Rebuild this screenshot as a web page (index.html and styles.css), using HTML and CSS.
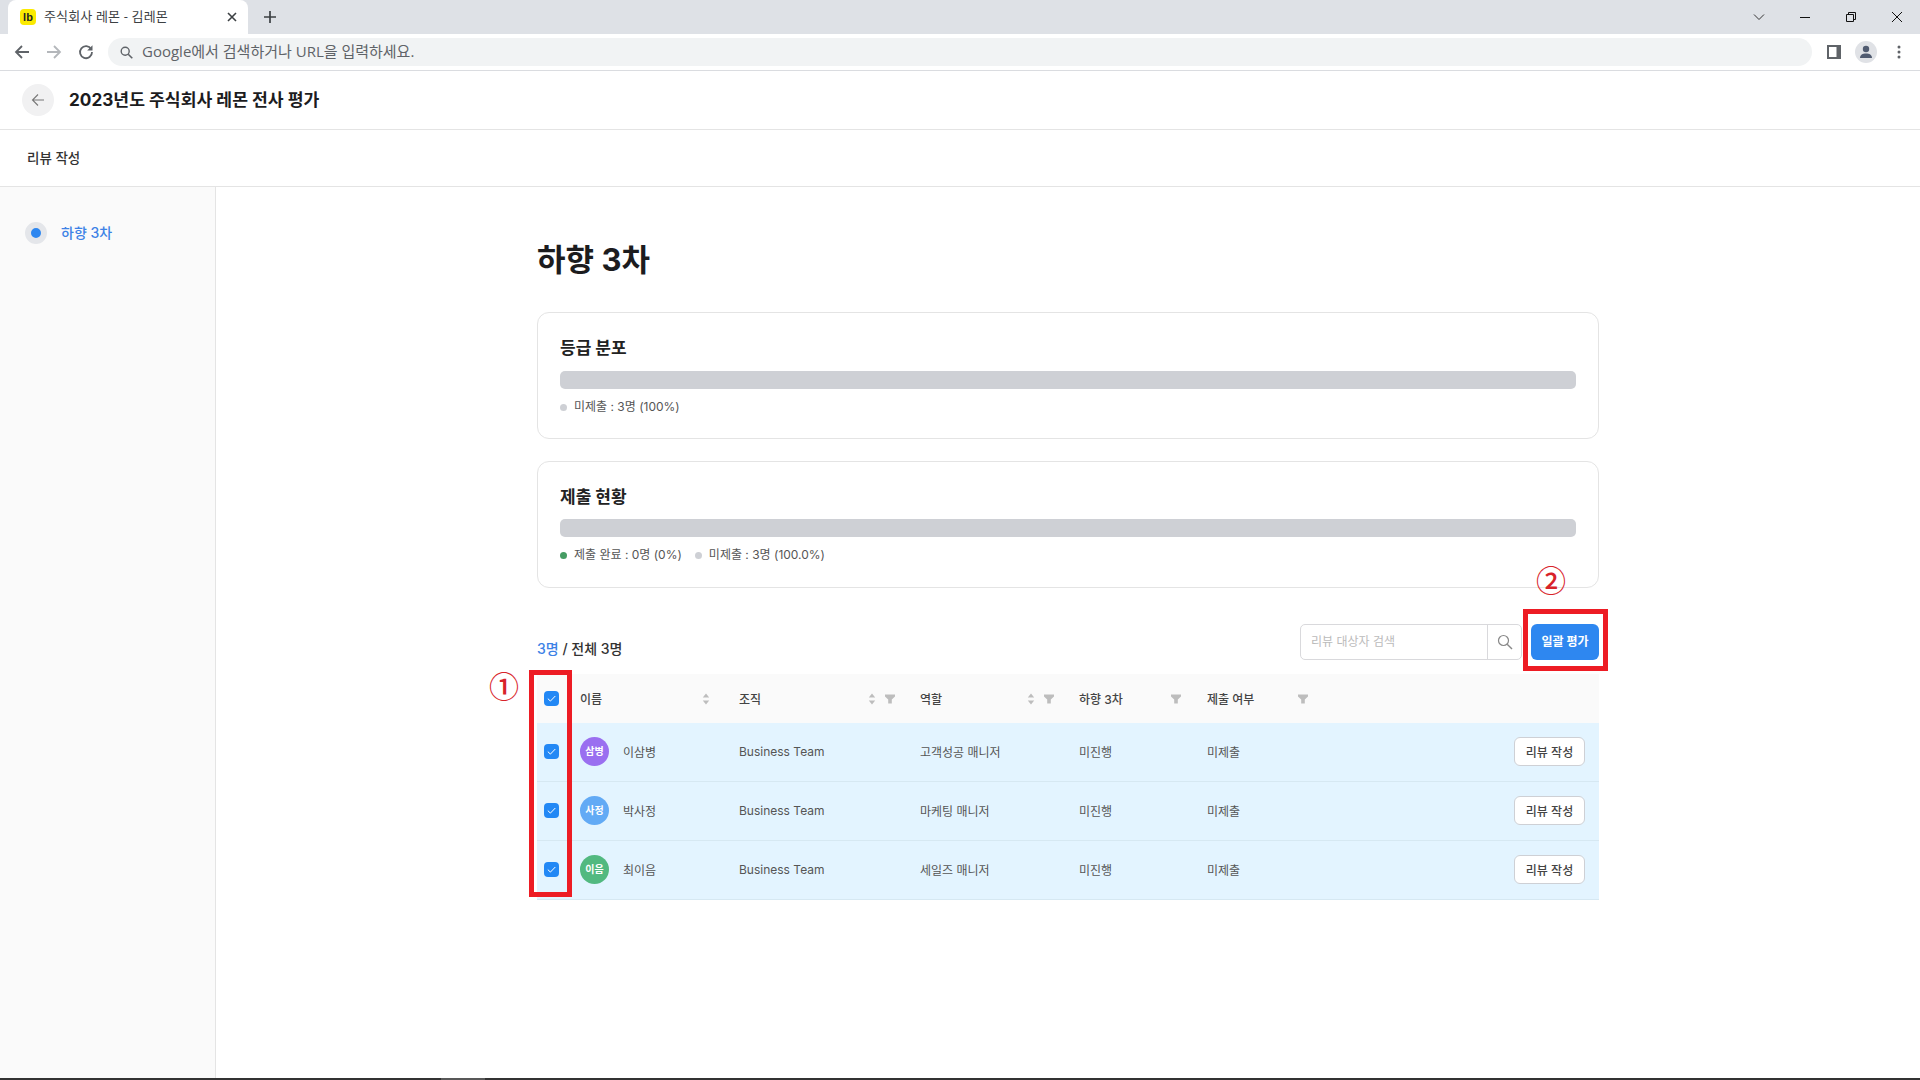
FILE: index.html

```html
<!DOCTYPE html>
<html lang="ko">
<head>
  <meta charset="UTF-8" />
  <meta name="viewport" content="width=device-width, initial-scale=1.0"/>
  <title>주식회사 레몬 - 김레몬</title>
  <link rel="stylesheet" href="styles.css">
</head>
<body>
  <svg class="defs" width="0" height="0" aria-hidden="true">
    <symbol id="i-sort" viewBox="0 0 10 14"><path d="M5 1.5 8.2 5.5H1.8zM5 12.5 1.8 8.5H8.2z"/></symbol>
    <symbol id="i-filter" viewBox="0 0 10 10"><path d="M0 .5h10v2L6.8 5.500v4H3.200v-4L0 2.500z"/></symbol>
    <symbol id="i-check" viewBox="0 0 15 15"><path d="M3.800 7.600 6.400 10.100 11.300 5" fill="none" stroke="#fff" stroke-width="1"/></symbol>
  </svg>

  <!-- browser chrome -->
  <div class="tabstrip">
    <div class="tab">
      <span class="favicon">lb</span>
      <span class="tab-title">주식회사 레몬 - 김레몬</span>
      <svg class="tab-close" width="10" height="10" viewBox="0 0 10 10"><path d="M1 1 9 9M9 1 1 9" stroke="#3c4043" stroke-width="1.6"/></svg>
    </div>
    <svg class="tab-new" width="14" height="14" viewBox="0 0 14 14"><path d="M7 1v12M1 7h12" stroke="#3c4043" stroke-width="1.7"/></svg>
    <div class="win-btns">
      <svg width="14" height="14" viewBox="0 0 14 14"><path d="M2 4.5 7 9.5 12 4.5" fill="none" stroke="#333" stroke-width="1"/></svg>
      <svg width="14" height="14" viewBox="0 0 14 14"><path d="M2 7.5H12" stroke="#111" stroke-width="1"/></svg>
      <svg width="14" height="14" viewBox="0 0 14 14"><path d="M2.5 4.5h7v7h-7zM4.5 4.5v-2h7v7h-2" fill="none" stroke="#111" stroke-width="1"/></svg>
      <svg width="14" height="14" viewBox="0 0 14 14"><path d="M2 2 12 12M12 2 2 12" stroke="#111" stroke-width="1"/></svg>
    </div>
  </div>
  <div class="toolbar">
    <svg class="nav-icon" width="16" height="16" viewBox="0 0 16 16"><path d="M15 8H2M8 2 2 8l6 6" fill="none" stroke="#5f6368" stroke-width="1.8"/></svg>
    <svg class="nav-icon" width="16" height="16" viewBox="0 0 16 16"><path d="M1 8h13M8 2l6 6-6 6" fill="none" stroke="#b4b7bb" stroke-width="1.8"/></svg>
    <svg class="nav-icon" width="16" height="16" viewBox="0 0 16 16"><path d="M13.2 5.2A6 6 0 1 0 14 8" fill="none" stroke="#5f6368" stroke-width="1.8"/><path d="M14.5 1.2v5.3H9.2z" fill="#5f6368"/></svg>
    <div class="omnibox">
      <svg width="13" height="13" viewBox="0 0 13 13"><circle cx="5.2" cy="5.2" r="4" fill="none" stroke="#5f6368" stroke-width="1.4"/><path d="M8.2 8.2 12.3 12.3" stroke="#5f6368" stroke-width="1.6"/></svg>
      <span>Google에서 검색하거나 URL을 입력하세요.</span>
    </div>
    <div class="toolbar-right">
      <svg width="14" height="14" viewBox="0 0 14 14"><path d="M0 0h14v14H0zM2 2v10h7.5V2z" fill="#5f6368" fill-rule="evenodd"/></svg>
      <span class="profile">
        <svg width="14" height="14" viewBox="0 0 14 14"><circle cx="7" cy="4" r="3.2" fill="#505b70"/><path d="M1 13c0-3.4 2.6-4.6 6-4.6s6 1.2 6 4.6z" fill="#505b70"/></svg>
      </span>
      <svg width="4" height="14" viewBox="0 0 4 14"><circle cx="2" cy="2" r="1.5" fill="#5f6368"/><circle cx="2" cy="7" r="1.5" fill="#5f6368"/><circle cx="2" cy="12" r="1.5" fill="#5f6368"/></svg>
    </div>
  </div>

  <!-- page -->
  <header class="page-head">
    <button class="back-btn">
      <svg width="14" height="14" viewBox="0 0 14 14"><path d="M13 7H1.5M7 1.5 1.5 7 7 12.5" fill="none" stroke="#777" stroke-width="1.1"/></svg>
    </button>
    <div class="page-title">2023년도 주식회사 레몬 전사 평가</div>
  </header>
  <div class="sub-head">리뷰 작성</div>

  <div class="main">
    <aside class="sidebar">
      <div class="side-item"><span class="side-dot"></span><span class="side-label">하향 3차</span></div>
    </aside>
    <div class="content">
      <div class="content-inner">
        <h1>하향 3차</h1>

        <section class="card">
          <h2>등급 분포</h2>
          <div class="bar"></div>
          <div class="legend">
            <span class="legend-item"><i class="dot"></i>미제출 : 3명 (100%)</span>
          </div>
        </section>

        <section class="card">
          <h2>제출 현황</h2>
          <div class="bar"></div>
          <div class="legend">
            <span class="legend-item"><i class="dot green"></i>제출 완료 : 0명 (0%)</span>
            <span class="legend-item"><i class="dot"></i>미제출 : 3명 (100.0%)</span>
          </div>
        </section>

        <div class="list-bar">
          <div class="count"><span class="blue">3명</span> / 전체 3명</div>
          <div class="search">
            <span class="search-text">리뷰 대상자 검색</span>
            <span class="search-btn">
              <svg width="16" height="16" viewBox="0 0 16 16"><circle cx="6.5" cy="6.5" r="5" fill="none" stroke="#888" stroke-width="1.2"/><path d="M10.2 10.2 15 15" stroke="#888" stroke-width="1.4"/></svg>
            </span>
          </div>
          <button class="bulk-btn">일괄 평가</button>
        </div>

        <table class="review-table">
          <colgroup>
            <col class="c-check"><col class="c-name"><col class="c-org"><col class="c-role"><col class="c-step"><col class="c-submit"><col>
          </colgroup>
          <thead>
            <tr>
              <th><span class="check"><svg width="15" height="15"><use href="#i-check"/></svg></span></th>
              <th><div class="th-in pad-name">이름<span class="th-icons"><svg class="ic-sort"><use href="#i-sort"/></svg></span></div></th>
              <th><div class="th-in">조직<span class="th-icons"><svg class="ic-sort"><use href="#i-sort"/></svg><svg class="ic-filter"><use href="#i-filter"/></svg></span></div></th>
              <th><div class="th-in">역할<span class="th-icons"><svg class="ic-sort"><use href="#i-sort"/></svg><svg class="ic-filter"><use href="#i-filter"/></svg></span></div></th>
              <th><div class="th-in">하향 3차<span class="th-icons"><svg class="ic-filter"><use href="#i-filter"/></svg></span></div></th>
              <th><div class="th-in">제출 여부<span class="th-icons"><svg class="ic-filter"><use href="#i-filter"/></svg></span></div></th>
              <th></th>
            </tr>
          </thead>
          <tbody>
            <tr>
              <td><span class="check"><svg width="15" height="15"><use href="#i-check"/></svg></span></td>
              <td><div class="person"><span class="avatar purple">삼병</span>이삼병</div></td>
              <td>Business Team</td>
              <td>고객성공 매니저</td>
              <td>미진행</td>
              <td>미제출</td>
              <td class="action"><button class="write-btn">리뷰 작성</button></td>
            </tr>
            <tr>
              <td><span class="check"><svg width="15" height="15"><use href="#i-check"/></svg></span></td>
              <td><div class="person"><span class="avatar sky">사정</span>박사정</div></td>
              <td>Business Team</td>
              <td>마케팅 매니저</td>
              <td>미진행</td>
              <td>미제출</td>
              <td class="action"><button class="write-btn">리뷰 작성</button></td>
            </tr>
            <tr>
              <td><span class="check"><svg width="15" height="15"><use href="#i-check"/></svg></span></td>
              <td><div class="person"><span class="avatar green">이음</span>최이음</div></td>
              <td>Business Team</td>
              <td>세일즈 매니저</td>
              <td>미진행</td>
              <td>미제출</td>
              <td class="action"><button class="write-btn">리뷰 작성</button></td>
            </tr>
          </tbody>
        </table>
      </div>
    </div>
  </div>
  <div class="taskbar-edge"><span></span></div>

  <!-- red annotations drawn over the screenshot -->
  <div class="mark mark-check"></div>
  <div class="mark mark-bulk"></div>
  <span class="mark-num num-1">①</span>
  <span class="mark-num num-2">②</span>
</body>
</html>
```

FILE: styles.css

```css
* {
  box-sizing: border-box;
}
body {
  position: relative;
  margin: 0;
  height: 1080px;
  overflow: hidden;
  display: flex;
  flex-direction: column;
  background: #fff;
  color: #222;
  font-family: Inter, "Noto Sans CJK KR", sans-serif;
}
.defs {
  position: absolute;
}
button {
  font-family: inherit;
  cursor: pointer;
}

/* browser chrome */
.tabstrip {
  height: 34px;
  flex: none;
  display: flex;
  align-items: flex-end;
  padding-left: 8px;
  background: #dee1e6;
}
.tab {
  position: relative;
  width: 240px;
  height: 34px;
  display: flex;
  align-items: center;
  padding: 0 12px;
  background: #fff;
  border-radius: 8px 8px 0 0;
}
.favicon {
  width: 16px;
  height: 16px;
  margin-right: 8px;
  border-radius: 4px;
  background: #fbea00;
  color: #222;
  font-family: "Liberation Sans", sans-serif;
  font-size: 11px;
  font-weight: 700;
  line-height: 16px;
  text-align: center;
}
.tab-title {
  flex: 1;
  margin-top: -4px;
  font-family: "Open Sans", "Noto Sans CJK KR", sans-serif;
  font-size: 13px;
  letter-spacing: 0.15px;
  color: #3c4043;
}
.tab-close {
  margin-right: -1px;
}
.tab-new {
  margin: 0 0 10px 15px;
}
.win-btns {
  margin-left: auto;
  height: 34px;
  display: flex;
  align-items: center;
  gap: 32px;
  padding-right: 16px;
}
.toolbar {
  height: 37px;
  flex: none;
  display: flex;
  align-items: center;
  padding: 0 15px 0 14px;
  background: #fff;
  border-bottom: 1px solid #dadce0;
}
.nav-icon {
  margin-right: 16px;
}
.nav-icon:nth-child(3) {
  margin-right: 14px;
}
.omnibox {
  width: 1704px;
  height: 28px;
  display: flex;
  align-items: center;
  gap: 9px;
  padding-left: 12px;
  border-radius: 14px;
  background: #f1f3f4;
  font-family: "Open Sans", "Noto Sans CJK KR", sans-serif;
  font-size: 15px;
  color: #5f6368;
}
.omnibox span {
  margin-top: -3px;
}
.toolbar-right {
  display: flex;
  align-items: center;
  margin-left: 15px;
}
.profile {
  width: 22px;
  height: 22px;
  margin: 0 20px 0 14px;
  display: flex;
  align-items: center;
  justify-content: center;
  border-radius: 50%;
  background: #e0e2e6;
}

/* page header */
.page-head {
  height: 59px;
  flex: none;
  display: flex;
  align-items: center;
  gap: 15px;
  padding-left: 22px;
  border-bottom: 1px solid #e4e4e4;
}
.back-btn {
  width: 32px;
  height: 32px;
  display: flex;
  align-items: center;
  justify-content: center;
  padding: 0;
  border: none;
  border-radius: 50%;
  background: #f1f1f2;
}
.page-title {
  margin-top: -4px;
  font-size: 17.2px;
  font-weight: 700;
  color: #1c1c1e;
}
.sub-head {
  height: 57px;
  flex: none;
  display: flex;
  align-items: center;
  padding: 0 0 2px 27px;
  border-bottom: 1px solid #e4e4e4;
  font-size: 13.5px;
  font-weight: 500;
  color: #333;
}
.main {
  flex: 1;
  display: flex;
  min-height: 0;
}
.sidebar {
  width: 216px;
  flex: none;
  padding: 35px 0 0 25px;
  background: #fafafa;
  border-right: 1px solid #e4e4e4;
}
.side-item {
  display: flex;
  align-items: center;
  gap: 14px;
  font-size: 14px;
  font-weight: 500;
  color: #3d82e6;
}
.side-label {
  margin-top: -2px;
}
.side-dot {
  width: 22px;
  height: 22px;
  border: 6px solid #e4e6ea;
  border-radius: 50%;
  background: #2e87f0;
}
.content {
  flex: 1;
  min-width: 0;
}
.content-inner {
  width: 1062px;
  margin: 0 auto;
  padding-top: 53px;
}
h1 {
  margin: 0 0 32px;
  font-size: 31px;
  font-weight: 700;
  line-height: 40px;
  color: #1c1c1e;
}

/* summary cards */
.card {
  height: 127px;
  margin-bottom: 22px;
  padding: 24px 22px 0;
  border: 1px solid #e4e4e4;
  border-radius: 12px;
}
.card h2 {
  margin: 0 0 11px;
  font-size: 17px;
  font-weight: 700;
  line-height: 23px;
  color: #222;
}
.card + .card h2 {
  margin-bottom: 10px;
}
.bar {
  height: 18px;
  border-radius: 5px;
  background: #ced0d5;
}
.legend {
  display: flex;
  gap: 13px;
  margin-top: 9px;
  font-size: 12px;
  line-height: 18px;
  color: #555;
}
.legend-item {
  display: flex;
  align-items: center;
}
.dot {
  width: 7px;
  height: 7px;
  margin-right: 7px;
  border-radius: 50%;
  background: #ced0d5;
}
.dot.green {
  background: #459c63;
}

/* list toolbar */
.list-bar {
  display: flex;
  align-items: center;
  margin-top: 36px;
  margin-bottom: 14px;
}
.count {
  margin-top: 12px;
  margin-right: auto;
  font-size: 14px;
  font-weight: 500;
  color: #333;
}
.blue {
  color: #3d82e6;
}
.search {
  width: 222px;
  height: 36px;
  display: flex;
  border: 1px solid #d9d9dc;
  border-radius: 5px;
}
.search-text {
  flex: 1;
  padding-left: 10px;
  font-size: 12px;
  line-height: 34px;
  color: #bbb;
}
.search-btn {
  width: 34px;
  display: flex;
  align-items: center;
  justify-content: center;
  border-left: 1px solid #d9d9dc;
}
.bulk-btn {
  width: 68px;
  height: 36px;
  margin-left: 9px;
  padding: 0 0 3px;
  border: none;
  border-radius: 6px;
  background: #2e87f0;
  color: #fff;
  font-size: 12px;
  font-weight: 700;
}

/* table */
.review-table {
  width: 100%;
  table-layout: fixed;
  border-collapse: collapse;
  font-size: 12px;
  color: #555;
}
.c-check { width: 31px; }
.c-name { width: 159px; }
.c-org { width: 181px; }
.c-role { width: 159px; }
.c-step { width: 127px; }
.c-submit { width: 127px; }
.review-table th {
  height: 49px;
  padding: 0 0 0 12px;
  background: #fafafa;
  font-weight: 500;
  text-align: left;
  color: #444;
}
.review-table th:first-child,
.review-table td:first-child {
  padding-left: 7px;
}
.review-table th:nth-child(6),
.review-table td:nth-child(6) {
  padding-left: 13px;
}
.review-table td {
  height: 59px;
  padding: 0 0 0 12px;
  background: #e3f4ff;
  border-bottom: 1px solid #d6e8f2;
}
.review-table tbody tr:first-child td {
  height: 58px;
}
.th-in {
  display: flex;
  align-items: center;
  justify-content: space-between;
  padding-right: 13px;
}
.th-in.pad-name {
  padding-right: 16px;
}
.th-icons {
  display: flex;
  align-items: center;
  gap: 8px;
}
.ic-sort {
  width: 10px;
  height: 14px;
  fill: #bdbdbd;
}
.ic-filter {
  width: 10px;
  height: 10px;
  fill: #bdbdbd;
}
.check {
  display: block;
  width: 15px;
  height: 15px;
  border-radius: 4px;
  background: #2288f5;
}
.check svg {
  display: block;
}
.person {
  display: flex;
  align-items: center;
  gap: 14px;
}
.avatar {
  width: 29px;
  height: 29px;
  display: flex;
  align-items: center;
  justify-content: center;
  padding-bottom: 2px;
  border-radius: 50%;
  color: #fff;
  font-size: 10px;
  font-weight: 700;
}
.avatar.purple { background: #9a6ff0; }
.avatar.sky { background: #62aaf5; }
.avatar.green { background: #52b980; }
.action {
  text-align: right;
  padding-right: 14px !important;
}
.write-btn {
  width: 71px;
  height: 29px;
  padding: 0;
  border: 1px solid #ced0d5;
  border-radius: 6px;
  background: #fff;
  color: #444;
  font-size: 12px;
  font-weight: 500;
}

.taskbar-edge {
  height: 2px;
  flex: none;
  background: #333;
}
.taskbar-edge span {
  display: block;
  width: 44px;
  height: 2px;
  margin-left: 441px;
  background: #585858;
}

/* annotations */
.mark {
  position: absolute;
  border: 5px solid #ed1c24;
}
.mark-check {
  left: 529px;
  top: 670px;
  width: 43px;
  height: 227px;
}
.mark-bulk {
  left: 1523px;
  top: 609px;
  width: 85px;
  height: 62px;
}
.mark-num {
  position: absolute;
  width: 30px;
  height: 30px;
  font-family: "Noto Sans CJK KR", sans-serif;
  font-size: 30px;
  font-weight: 500;
  line-height: 30px;
  text-align: center;
  color: #d8232a;
}
.num-1 {
  left: 489px;
  top: 670px;
}
.num-2 {
  left: 1536px;
  top: 564px;
}
```
